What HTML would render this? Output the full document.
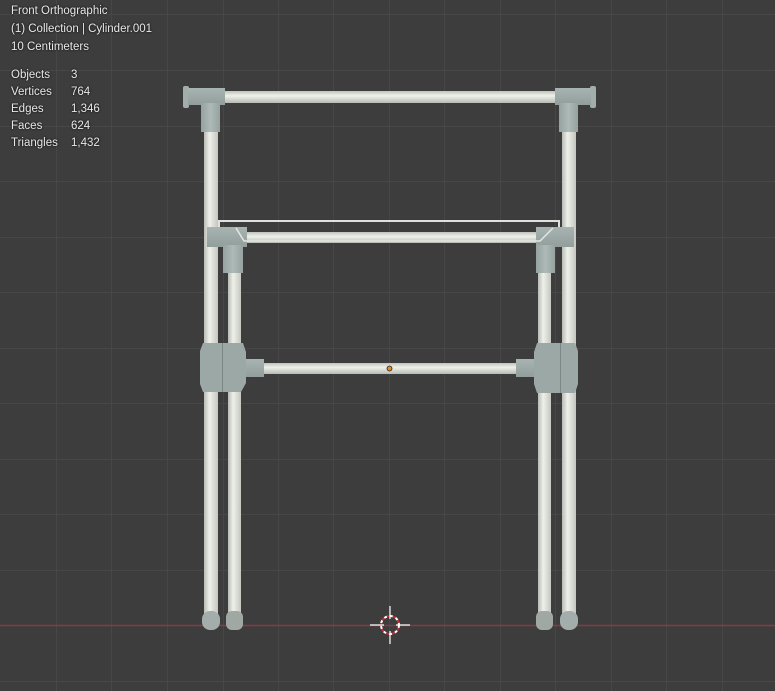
<!DOCTYPE html>
<html><head><meta charset="utf-8"><style>
html,body{margin:0;padding:0;width:775px;height:691px;overflow:hidden;background:#3d3d3d}
svg{position:absolute;left:0;top:0}
.t{position:absolute;font-family:"Liberation Sans",sans-serif;font-size:11.5px;color:#e8e8e8;text-shadow:0 0 2px #000;white-space:nowrap}
</style></head><body>
<svg width="775" height="691">
<defs>
<linearGradient id="tv" x1="0" x2="1" y1="0" y2="0"><stop offset="0" stop-color="#b9bcb6"/><stop offset=".4" stop-color="#eef0ea"/><stop offset="1" stop-color="#c4c6bf"/></linearGradient>
<linearGradient id="th" x1="0" x2="0" y1="0" y2="1"><stop offset="0" stop-color="#c0c2bc"/><stop offset=".4" stop-color="#eef0ea"/><stop offset="1" stop-color="#b8bab4"/></linearGradient>
<linearGradient id="cv" x1="0" x2="1" y1="0" y2="0"><stop offset="0" stop-color="#94a2a0"/><stop offset=".5" stop-color="#aebab8"/><stop offset="1" stop-color="#96a2a0"/></linearGradient>
<linearGradient id="ch" x1="0" x2="0" y1="0" y2="1"><stop offset="0" stop-color="#a8b4b2"/><stop offset="1" stop-color="#929e9c"/></linearGradient>
</defs>
<g stroke="#474747" stroke-width="1">
<path d="M56.5 0V691M111.5 0V691M167.5 0V691M223.5 0V691M278.5 0V691M333.5 0V691M389.5 0V691M444.5 0V691M500.5 0V691M555.5 0V691M611.5 0V691M666.5 0V691M722.5 0V691"/>
<path d="M0 14.5H775M0 70.5H775M0 126.5H775M0 181.5H775M0 237.5H775M0 292.5H775M0 348.5H775M0 403.5H775M0 459.5H775M0 514.5H775M0 570.5H775M0 681.5H775"/>
</g>
<line x1="0" y1="625.5" x2="775" y2="625.5" stroke="#8a3a42" stroke-width="1.5"/>
<rect x="204" y="128" width="14" height="490" fill="url(#tv)"/>
<rect x="228" y="270" width="13" height="348" fill="url(#tv)"/>
<rect x="538" y="270" width="13" height="348" fill="url(#tv)"/>
<rect x="562" y="128" width="14" height="490" fill="url(#tv)"/>
<rect x="202" y="611" width="18" height="19" rx="8" fill="#a3aeac"/>
<rect x="226" y="611" width="17" height="19" rx="6" fill="#a0a8a4"/>
<rect x="536" y="611" width="17" height="19" rx="6" fill="#a0a8a4"/>
<rect x="560" y="611" width="18" height="19" rx="8" fill="#a3aeac"/>
<rect x="222" y="91" width="336" height="12" fill="url(#th)"/>
<rect x="183" y="86" width="6" height="22" rx="2" fill="#a2aeac"/>
<rect x="188" y="88" width="37" height="17" fill="url(#ch)"/>
<rect x="201" y="103" width="19" height="29" fill="url(#cv)"/>
<rect x="590" y="86" width="6" height="22" rx="2" fill="#a2aeac"/>
<rect x="555" y="88" width="36" height="17" fill="url(#ch)"/>
<rect x="559" y="103" width="19" height="29" fill="url(#cv)"/>
<path d="M219 236V221H559V236" fill="none" stroke="#dfe1dc" stroke-width="2"/>
<rect x="244" y="232" width="294" height="11" fill="url(#th)"/>
<rect x="207" y="227" width="40" height="20" fill="url(#ch)"/>
<rect x="536" y="227" width="38" height="20" fill="url(#ch)"/>
<rect x="223" y="245" width="20" height="28" fill="url(#cv)"/>
<rect x="536" y="245" width="19" height="28" fill="url(#cv)"/>
<path d="M236 228L244 241H540L553 228" fill="none" stroke="#e4e6e1" stroke-width="1.5"/>
<rect x="262" y="363" width="257" height="11" fill="url(#th)"/>
<rect x="244" y="359" width="20" height="18" fill="url(#ch)"/>
<rect x="516" y="359" width="20" height="18" fill="url(#ch)"/>
<path d="M203 343H243L246 352V383L241 392H203L200 384V351Z" fill="#9ca8a6"/>
<rect x="222" y="343" width="1" height="49" fill="#7d8886"/>
<path d="M537 343H575L578 351V384L575 393H537L534 384V352Z" fill="#9ca8a6"/>
<rect x="560" y="343" width="1" height="50" fill="#7d8886"/>
<circle cx="389.5" cy="368.5" r="2.5" fill="#e88a2a" stroke="#222" stroke-width=".8"/>
<circle cx="390" cy="625" r="9" fill="none" stroke="#fff" stroke-width="2" stroke-dasharray="3 3"/>
<circle cx="390" cy="625" r="9" fill="none" stroke="#c0303a" stroke-width="2" stroke-dasharray="3 3" stroke-dashoffset="3"/>
<path d="M370 625H384M396 625H410M390 606V619M390 631V644" stroke="#fff" stroke-width="1.2"/>
</svg>
<div class="t" style="left:11px;top:5px">Front Orthographic</div>
<div class="t" style="left:11px;top:23px">(1) Collection | Cylinder.001</div>
<div class="t" style="left:11px;top:41px">10 Centimeters</div>
<div class="t" style="left:11px;top:69px">Objects</div><div class="t" style="left:71px;top:69px">3</div>
<div class="t" style="left:11px;top:86px">Vertices</div><div class="t" style="left:71px;top:86px">764</div>
<div class="t" style="left:11px;top:103px">Edges</div><div class="t" style="left:71px;top:103px">1,346</div>
<div class="t" style="left:11px;top:120px">Faces</div><div class="t" style="left:71px;top:120px">624</div>
<div class="t" style="left:11px;top:137px">Triangles</div><div class="t" style="left:71px;top:137px">1,432</div>
</body></html>
